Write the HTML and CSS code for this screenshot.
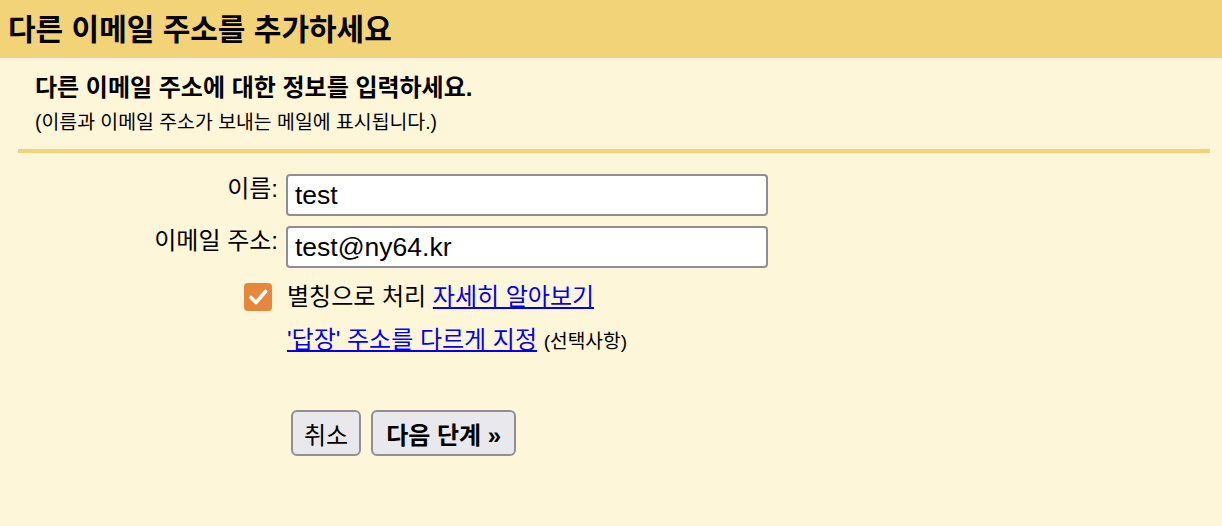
FILE: index.html
```html
<!DOCTYPE html>
<html lang="ko">
<head>
<meta charset="utf-8">
<title>다른 이메일 주소를 추가하세요</title>
<link rel="stylesheet" href="styles.css">
</head>
<body>
<div class="header">다른 이메일 주소를 추가하세요</div>
<div class="intro">
  <div class="intro-title">다른 이메일 주소에 대한 정보를 입력하세요.</div>
  <div class="intro-note">(이름과 이메일 주소가 보내는 메일에 표시됩니다.)</div>
</div>
<div class="rule"></div>
<form class="form">
  <label class="label" for="name">이름:</label>
  <input class="field" id="name" type="text" value="test">
  <label class="label" for="email">이메일 주소:</label>
  <input class="field" id="email" type="text" value="test@ny64.kr">
  <span class="check-cell">
    <span class="checkbox"><svg width="28" height="28" viewBox="0 0 28 28"><path d="M7 14.5 L12 19.5 L21.5 8.5" fill="none" stroke="#fff" stroke-width="3.6" stroke-linecap="round" stroke-linejoin="round"/></svg></span>
  </span>
  <span class="check-text">별칭으로 처리 <a href="#" class="link">자세히 알아보기</a></span>
  <span class="reply-row"><a href="#" class="link">'답장' 주소를 다르게 지정</a> <span class="optional">(선택사항)</span></span>
  <span class="buttons">
    <button type="button" class="btn">취소</button>
    <button type="button" class="btn btn-primary">다음 단계 »</button>
  </span>
</form>
</body>
</html>
```
FILE: styles.css
```css
html, body {
  margin: 0;
  padding: 0;
  background: #fdf6d8;
  color: #000;
  font-family: "Liberation Sans", "Noto Sans CJK KR", sans-serif;
}
.header {
  height: 58px;
  line-height: 60px;
  background: #f3d377;
  padding-left: 8px;
  font-size: 30px;
  font-weight: bold;
}
.intro {
  padding: 16px 0 0 35px;
}
.intro-title {
  font-size: 24px;
  font-weight: bold;
  line-height: 28px;
}
.intro-note {
  font-size: 19.4px;
  line-height: 40px;
}
.rule {
  height: 4px;
  background: #f3d377;
  margin: 7px 12px 0 18px;
}
.form {
  display: grid;
  grid-template-columns: 278px 482px;
  column-gap: 8px;
  row-gap: 10px;
  margin-top: 21px;
}
.label {
  justify-self: end;
  align-self: start;
  font-size: 24px;
  line-height: 30px;
}
.field {
  box-sizing: border-box;
  width: 482px;
  height: 42px;
  border: 2px solid #8e8e95;
  border-radius: 4px;
  background: #fff;
  padding: 0 7px;
  font-family: "Liberation Sans", "Noto Sans CJK KR", sans-serif;
  font-size: 26.5px;
  color: #000;
  outline: none;
}
.check-cell {
  grid-column: 1;
  justify-self: end;
  margin-right: 6px;
  margin-top: 4px;
  display: flex;
  align-items: center;
  height: 30px;
}
.checkbox {
  width: 28px;
  height: 28px;
  background: #e8873b;
  border-radius: 4px;
  display: block;
}
.checkbox svg {
  display: block;
}
.check-text {
  grid-column: 2;
  margin-top: 4px;
  font-size: 24px;
  line-height: 30px;
  padding-left: 1px;
}
.link {
  color: #0000ee;
  text-decoration: underline;
}
.reply-row {
  grid-column: 2;
  margin-top: 3px;
  font-size: 24px;
  line-height: 30px;
  padding-left: 1px;
}
.optional {
  font-size: 19.2px;
}
.buttons {
  grid-column: 2;
  margin-top: 43px;
  margin-left: 5px;
  display: flex;
  gap: 10px;
}
.btn {
  height: 46px;
  box-sizing: border-box;
  border: 2px solid #8f8f9a;
  border-radius: 6px;
  background: #e9e9ed;
  padding: 0 11px;
  font-family: "Liberation Sans", "Noto Sans CJK KR", sans-serif;
  font-size: 24px;
  color: #000;
}
.btn-primary {
  font-weight: bold;
  padding: 0 13px;
}
```
